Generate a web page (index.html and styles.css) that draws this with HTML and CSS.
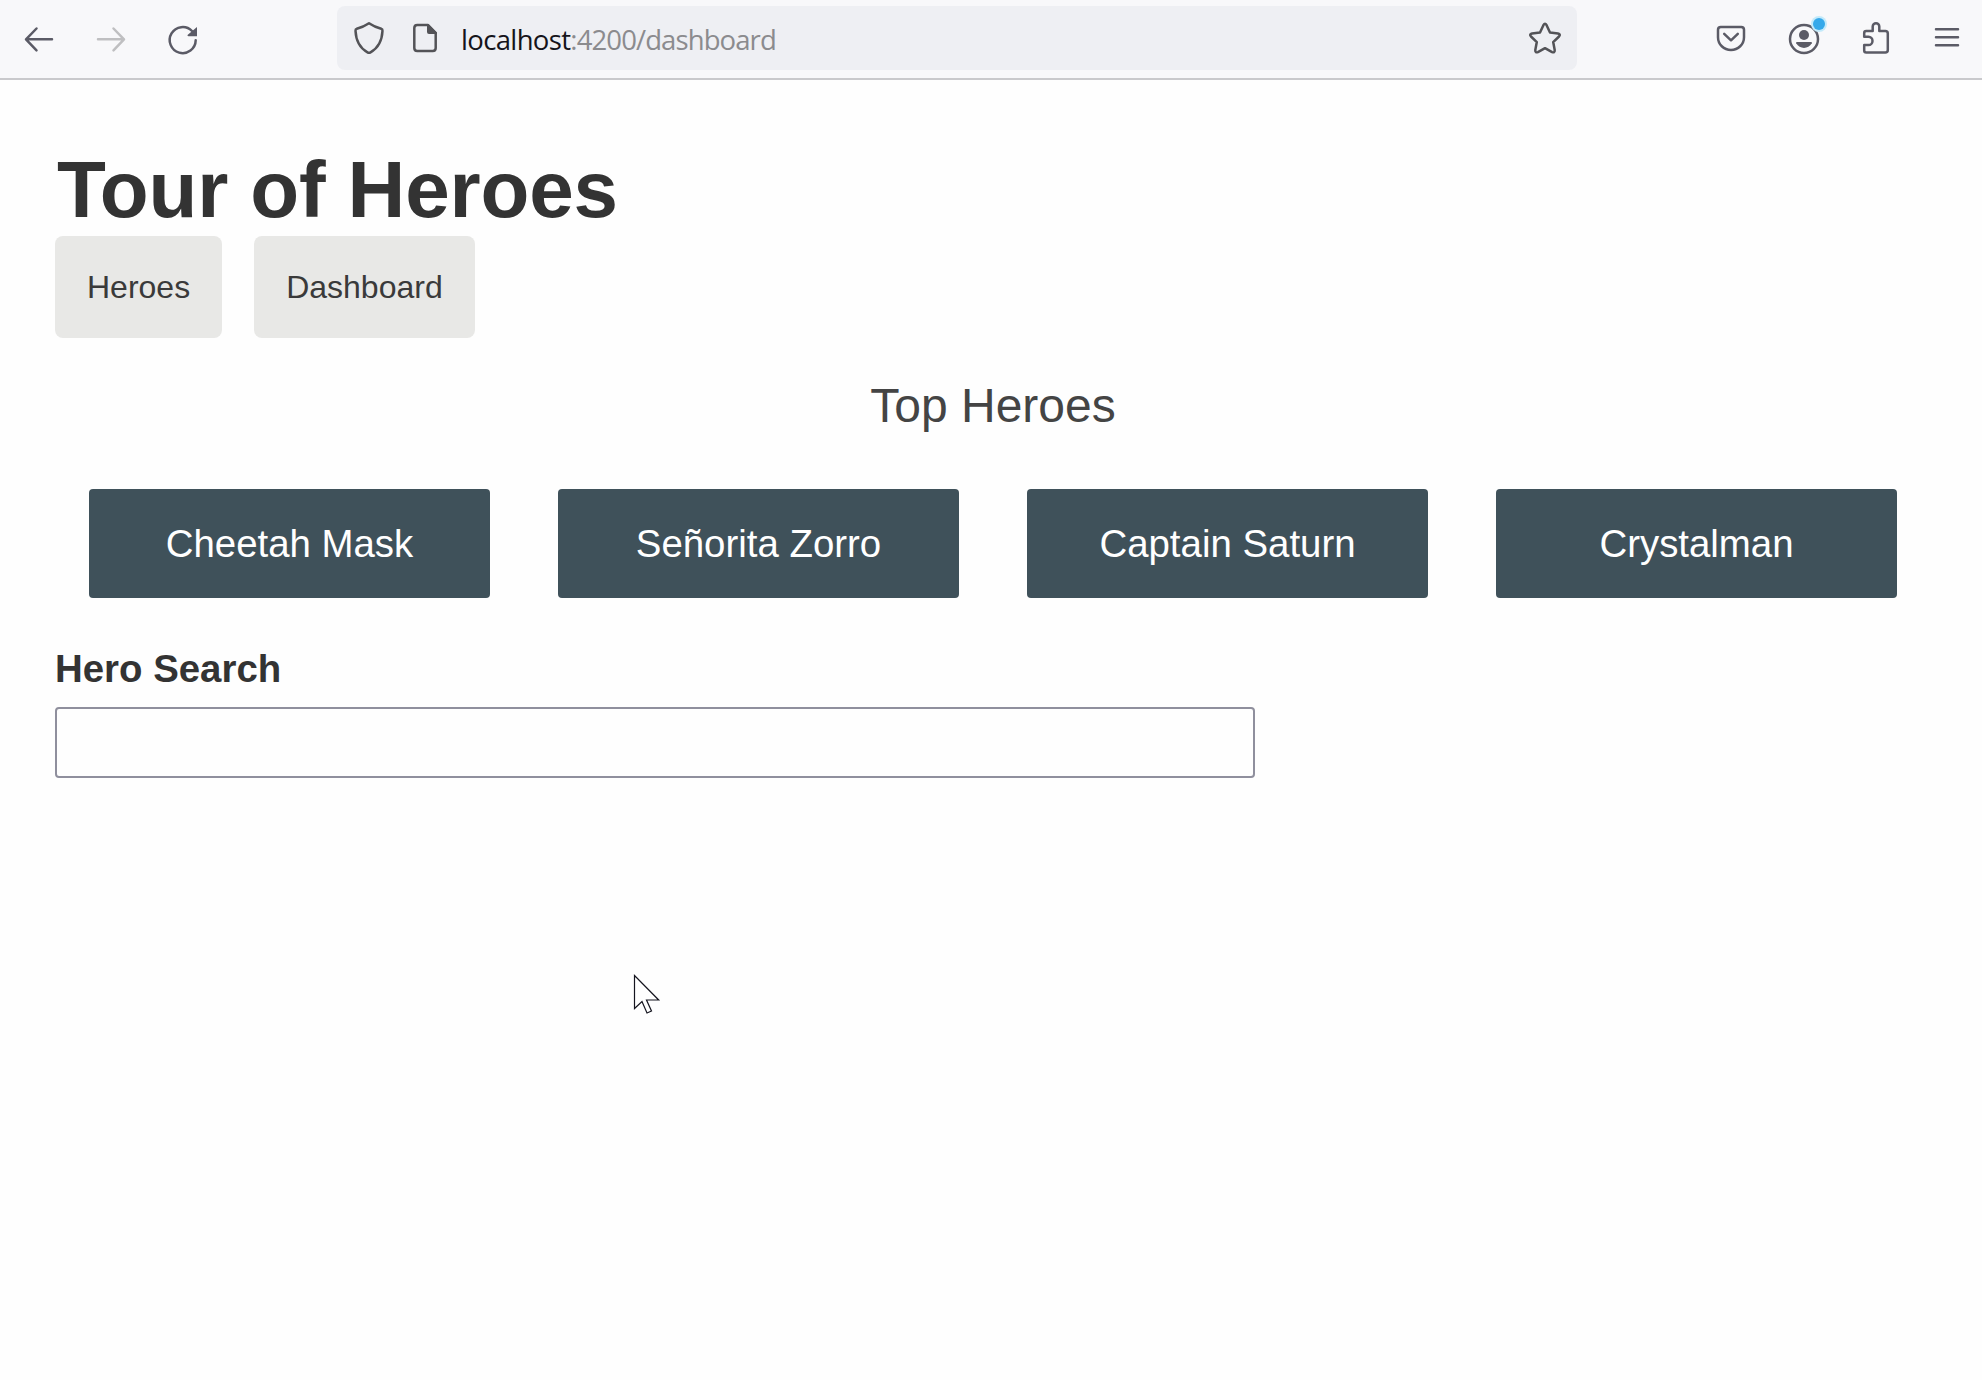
FILE: index.html
```html
<!DOCTYPE html>
<html lang="en">
<head>
<meta charset="utf-8">
<title>Tour of Heroes</title>
<link rel="stylesheet" href="styles.css">
</head>
<body>
<header class="toolbar">
  <div class="tools">
    <svg class="icon" viewBox="0 0 40 40"><path d="M33 20.3H7.500M17.500 9.500 7 20.300l10.500 11"/></svg>
    <svg class="icon disabled" viewBox="0 0 40 40"><path d="M7 20.300h25.500M22.500 9.500 33 20.300l-10.500 11"/></svg>
    <svg class="icon" viewBox="0 0 40 40"><path d="M29 12A13 13 0 1 0 32.700 21.300"/><path class="solid" d="M34 8v9.300h-8.500c-1 0-1.300-.9-.7-1.500z"/></svg>
  </div>
  <div class="address">
    <svg class="icon dark" viewBox="0 0 40 40"><path d="M20 5.200c4.500 3 9 4.700 12.200 5.600.9.300 1.400 1 1.300 2C33 23 29.500 30 21.500 34.300q-1.500.8-3 0C10.500 30 7 23 6.500 12.800c-.1-1 .4-1.700 1.300-2C11 9.900 15.500 8.200 20 5.200z"/></svg>
    <svg class="icon dark" viewBox="0 0 40 40"><path d="M23 7H12.300Q9.300 7 9.300 10v20q0 3 3 3h15.400q3 0 3-3V15z"/><path class="solid" d="M22 6h1.500L32 14.500V16h-8q-2 0-2-2z"/></svg>
    <div class="url"><span class="host">localhost</span>:4200/dashboard</div>
    <svg class="icon dark" viewBox="0 0 40 40"><path d="M18.400 7.200q1.600-2.800 3.200 0l3.400 7.300 8 1q3 .7 1 3l-5.800 5.600 1.500 8q.2 3-2.600 2L20 30.200l-7.100 3.900q-2.800 1-2.600-2l1.500-8L6 18.500q-2-2.300 1-3l8-1z"/></svg>
  </div>
  <div class="tools">
    <svg class="icon" viewBox="0 0 40 40"><path d="M9.800 8h20.400Q33 8 33 10.800v7.400A13 12.800 0 0 1 7 18.200v-7.400Q7 8 9.800 8zM13.200 14.800 20 21.300l6.800-6.500"/></svg>
    <svg class="icon" viewBox="0 0 40 40"><circle cx="21" cy="20" r="14"/><circle class="solid" cx="21" cy="16" r="5"/><path class="solid" d="M14 23h14q1.300 0 .8 1.300c-3.500 6.200-12.100 6.200-15.600 0q-.5-1.300.8-1.300z"/><circle class="halo" cx="36" cy="5" r="8"/><circle class="dot" cx="36" cy="5" r="6"/></svg>
    <svg class="icon" viewBox="0 0 40 40"><path d="M9.200 17.800V14q0-2 2-2h6.500V7.500a3.300 3.300 0 0 1 6.600 0V12h6q2.500 0 2.500 2.500V31q0 2.500-2.500 2.500H11.200q-2 0-2-2V26h4.200a4.100 4.100 0 0 0 0-8.200z"/></svg>
    <svg class="icon" viewBox="0 0 40 40"><path d="M9 10.200h22M9 18.200h22M9 26.200h22"/></svg>
  </div>
</header>
<main class="page">
  <h1 class="title">Tour of Heroes</h1>
  <nav class="nav"><a class="nav-link">Heroes</a><a class="nav-link">Dashboard</a></nav>
  <h2 class="subtitle">Top Heroes</h2>
  <div class="heroes">
    <a class="hero">Cheetah Mask</a>
    <a class="hero">Señorita Zorro</a>
    <a class="hero">Captain Saturn</a>
    <a class="hero">Crystalman</a>
  </div>
  <label class="search-label" for="search">Hero Search</label>
  <input class="search" id="search">
</main>
<svg class="cursor" viewBox="0 0 30 42"><path d="M2.500 2.500v33l7.500-7 5 11.500 4.500-2-5-11h12.200z"/></svg>
</body>
</html>
```
FILE: styles.css
```css
* { box-sizing: border-box; }
body {
  margin: 0;
  min-height: 1380px;
  background: #fefefe;
  font-family: "Liberation Sans", Arial, sans-serif;
  color: #333;
}
.toolbar {
  display: flex;
  align-items: center;
  justify-content: space-between;
  height: 80px;
  padding: 0 15px 0 19px;
  background: #f8f8fa;
  border-bottom: 2px solid #c9c9cc;
}
.tools { display: flex; gap: 32px; }
.icon {
  flex: none;
  width: 40px;
  height: 40px;
  overflow: visible;
  fill: none;
  stroke: #5b5b66;
  stroke-width: 2.5;
  stroke-linecap: round;
  stroke-linejoin: round;
}
.disabled { stroke: #bfbfc1; }
.dark { stroke: #535357; }
.icon .solid { fill: #5b5b66; stroke: none; }
.dark .solid { fill: #535357; }
.icon .halo { fill: #c3eafa; stroke: none; }
.icon .dot { fill: #35a9ea; stroke: none; }
.address {
  display: flex;
  align-items: center;
  gap: 16px;
  width: 1240px;
  height: 64px;
  margin-bottom: 2px;
  padding: 0 12px;
  border-radius: 8px;
  background: #eeeff3;
}
.url {
  flex: 1;
  padding-top: 4px;
  font: 27.500px/36px "Open Sans", "Noto Sans", sans-serif;
  letter-spacing: -0.9px;
  color: #8b8b8e;
}
.host { color: #15141a; letter-spacing: -0.65px; }
.page { padding: 64px 51px 0 55px; }
.title {
  margin: 0;
  padding: 0 0 0 2px;
  font-size: 80px;
  line-height: 92px;
  letter-spacing: -0.15px;
}
.nav { display: flex; gap: 32px; }
.nav-link {
  height: 102px;
  padding: 0 32px;
  border-radius: 8px;
  background: #e8e8e6;
  color: #3a3a3a;
  font-size: 32px;
  line-height: 102px;
}
.subtitle {
  margin: 40px 0 56px;
  font-size: 48px;
  font-weight: 400;
  line-height: 55px;
  text-align: center;
  color: #444;
}
.heroes {
  display: grid;
  grid-template-columns: repeat(4, 401px);
  gap: 68px;
  padding-left: 34px;
}
.hero {
  height: 109px;
  border-radius: 4px;
  background: #3f515a;
  color: #fff;
  font-size: 38.400px;
  line-height: 109px;
  text-align: center;
}
.search-label {
  display: block;
  margin-top: 49px;
  font-size: 38.400px;
  font-weight: 700;
  line-height: 44px;
}
.search {
  display: block;
  width: 1200px;
  height: 71px;
  margin-top: 16px;
  border: 2px solid #8f8f9d;
  border-radius: 4px;
  background: #fefefe;
}
.cursor {
  position: absolute;
  left: 632px;
  top: 973px;
  width: 30px;
  height: 42px;
  fill: #fff;
  stroke: #15151f;
  stroke-width: 1.2;
}
```
